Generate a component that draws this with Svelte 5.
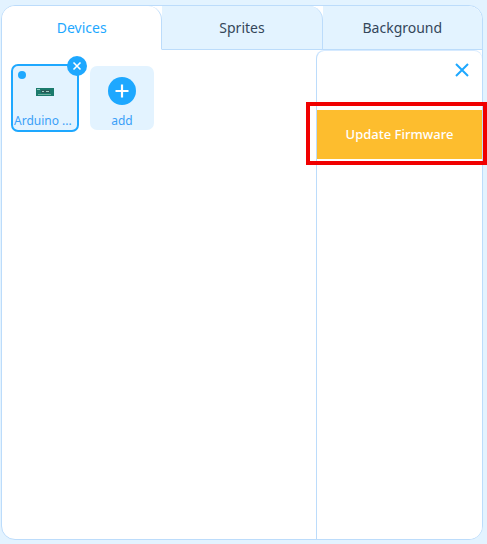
<script>
  const tabs = ['Devices', 'Sprites', 'Background'];
  let active = 'Devices';
</script>

<div class="page">
  <div class="panel">
    <div class="tabs">
      {#each tabs as tab}
        <div class="tab" class:active={tab === active}>{tab}</div>
      {/each}
    </div>
    <div class="body">
      <div class="devices">
        <div class="card selected">
          <span class="dot"></span>
          <span class="remove">
            <svg width="10" height="10" viewBox="0 0 10 10">
              <path d="M1.5 1.5l7 7M8.5 1.5l-7 7" stroke="#fff" stroke-width="1.6" fill="none" />
            </svg>
          </span>
          <svg class="board" width="18" height="8" viewBox="0 0 18 8">
            <rect width="18" height="8" fill="#1b7a6c" />
            <rect x="5" y="2" width="9" height="3" fill="#2b5a58" />
            <rect x="1" y="1" width="3" height="1" fill="#8fc9bb" />
            <rect x="6" y="3" width="2" height="1" fill="#9fd0c4" />
            <rect x="10" y="3" width="3" height="1" fill="#9fd0c4" />
            <rect x="2" y="6" width="13" height="1" fill="#6fae9f" />
          </svg>
          <div class="name">Arduino ...</div>
        </div>
        <div class="card">
          <span class="plus">
            <svg width="28" height="28" viewBox="0 0 28 28">
              <path d="M14 7.5v13M7.5 14h13" stroke="#fff" stroke-width="2.2" fill="none" />
            </svg>
          </span>
          <div class="name">add</div>
        </div>
      </div>
      <div class="side">
        <div class="side-head">
          <svg width="14" height="14" viewBox="0 0 14 14">
            <path d="M1 1l12 12M13 1L1 13" stroke="#1ea8ff" stroke-width="2" fill="none" />
          </svg>
        </div>
        <button class="update">Update Firmware</button>
      </div>
    </div>
  </div>
  <div class="highlight"></div>
</div>

<style>
  :global(body) {
    margin: 0;
  }

  .page {
    position: relative;
    width: 487px;
    height: 544px;
    box-sizing: border-box;
    padding: 5px 4px 4px 1px;
    background: #e3f3ff;
    font-family: "Noto Sans", "Open Sans", sans-serif;
    overflow: hidden;
  }

  .panel {
    height: 100%;
    box-sizing: border-box;
    display: flex;
    flex-direction: column;
    background: #fff;
    border: 1px solid #bcdcfb;
    border-radius: 14px;
    overflow: hidden;
  }

  .tabs {
    display: flex;
    height: 44px;
    flex-shrink: 0;
  }

  .tab {
    flex: 1;
    display: flex;
    align-items: center;
    justify-content: center;
    font-size: 14px;
    color: #34465a;
    background: #e3f3ff;
    border-bottom: 1px solid #bcdcfb;
    border-right: 1px solid #bcdcfb;
    border-top-right-radius: 14px;
  }

  .tab:last-child {
    border-right: none;
  }

  .tab.active {
    color: #1ea8ff;
    background: #fff;
    border-bottom-color: transparent;
  }

  .body {
    flex: 1;
    display: flex;
    min-height: 0;
  }

  .devices {
    flex: 1;
    display: flex;
    align-items: flex-start;
    gap: 11px;
    padding: 16px 0 0 9px;
  }

  .card {
    position: relative;
    width: 64px;
    height: 64px;
    box-sizing: border-box;
    display: flex;
    flex-direction: column;
    align-items: center;
    background: #e3f3ff;
    border-radius: 7px;
  }

  .card.selected {
    width: 68px;
    height: 68px;
    margin-top: -2px;
    border: 2px solid #1ea8ff;
  }

  .dot {
    position: absolute;
    top: 5px;
    left: 5px;
    width: 8px;
    height: 8px;
    border-radius: 50%;
    background: #1ea8ff;
  }

  .remove {
    position: absolute;
    top: -10px;
    right: -10px;
    width: 20px;
    height: 20px;
    display: flex;
    align-items: center;
    justify-content: center;
    border-radius: 50%;
    background: #1ea8ff;
  }

  .board {
    margin-top: 22px;
  }

  .plus {
    width: 28px;
    height: 28px;
    margin-top: 11px;
    border-radius: 50%;
    background: #1ea8ff;
  }

  .plus svg {
    display: block;
  }

  .name {
    margin-top: auto;
    font-size: 12px;
    line-height: 18px;
    color: #3a9ff8;
    white-space: nowrap;
  }

  .selected .name {
    align-self: flex-start;
    padding-left: 1px;
  }

  .side {
    width: 166px;
    flex-shrink: 0;
    box-sizing: border-box;
    margin-top: 1px;
    background: #fff;
    border-left: 1px solid #bcdcfb;
    border-top-left-radius: 8px;
    border-top-right-radius: 8px;
    box-shadow: 0 -1px 0 #d6eaff;
  }

  .side-head {
    height: 59px;
    display: flex;
    justify-content: flex-end;
    align-items: flex-start;
    padding: 12px 13px 0 0;
    box-sizing: border-box;
  }

  .side-head svg {
    display: block;
  }

  .update {
    display: block;
    width: 100%;
    height: 49px;
    border: none;
    padding: 0 0 2px;
    background: #fdbd2e;
    color: #fff;
    font: inherit;
    font-size: 13px;
    font-weight: 500;
  }

  .highlight {
    position: absolute;
    left: 306px;
    top: 102px;
    width: 181px;
    height: 63px;
    box-sizing: border-box;
    border: 4px solid #f00000;
  }
</style>
